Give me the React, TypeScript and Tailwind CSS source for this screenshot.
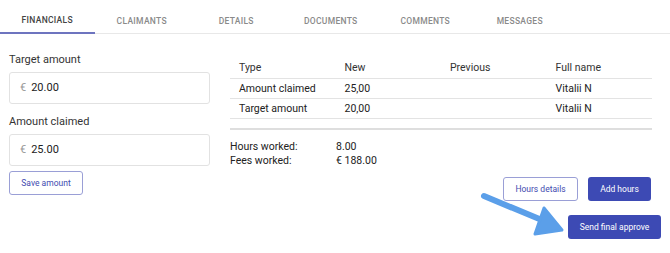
import React from "react";

const tabs = ["FINANCIALS", "CLAIMANTS", "DETAILS", "DOCUMENTS", "COMMENTS", "MESSAGES"];

function AmountInput({ label, value }: { label: string; value: string }) {
  return (
    <div className="flex flex-col">
      <div className="h-[24px] flex items-center text-[11px] text-[#333]">{label}</div>
      <div className="h-[32px] w-[201px] border border-[#e2e2e2] rounded-[3px] flex items-center pl-[10px] text-[11px]">
        <span className="text-[#999] mr-[5px]">€</span>
        <span className="text-[#222]">{value}</span>
      </div>
    </div>
  );
}

export default function App() {
  const rows = [
    ["Amount claimed", "25,00", "", "Vitalii N"],
    ["Target amount", "20,00", "", "Vitalii N"],
  ];
  return (
    <div className="relative w-[670px] h-[253px] bg-white overflow-hidden" style={{ fontFamily: "Roboto, 'Liberation Sans', sans-serif" }}>
      <div className="flex h-[34px] border-b border-[#e8e8e8]">
        {tabs.map((t, i) => (
          <div
            key={t}
            className={
              i === 0
                ? "w-[94.5px] flex items-center justify-center pt-[9px] text-[8.5px] font-medium tracking-[0.3px] text-[#444] border-b-2 border-[#6d74bf] -mb-px"
                : "w-[94.5px] flex items-center justify-center pt-[10px] text-[8.5px] font-medium tracking-[0.3px] text-[#8a8a8a]"
            }
          >
            {t}
          </div>
        ))}
      </div>

      <div className="flex pl-[9px] pt-[14px]">
        <div className="w-[201px] flex flex-col">
          <AmountInput label="Target amount" value="20.00" />
          <div className="h-[6px]" />
          <AmountInput label="Amount claimed" value="25.00" />
          <button className="mt-[5px] w-[74px] h-[24px] border border-[#9a9fd6] rounded-[3px] text-[8.5px] text-[#3f4bb0] flex items-center justify-center">
            Save amount
          </button>
        </div>

        <div className="ml-[20px] w-[431px] flex flex-col pt-[9px]">
          <div className="w-[422px]">
            <div className="flex h-[22px] items-center border-b border-[#e3e3e3] text-[10.5px] text-[#333]">
              <div className="w-[105.5px] pl-[9px]">Type</div>
              <div className="w-[105.5px] pl-[9px]">New</div>
              <div className="w-[105.5px] pl-[9px]">Previous</div>
              <div className="w-[105.5px] pl-[9px]">Full name</div>
            </div>
            {rows.map((r, i) => (
              <div key={i} className="flex h-[20px] items-center border-b border-[#e3e3e3] text-[10.5px] text-[#222]">
                {r.map((c, j) => (
                  <div key={j} className="w-[105.5px] pl-[9px]">{c}</div>
                ))}
              </div>
            ))}
            <div className="mt-[9px] h-[2px] bg-[#dedede]" />
          </div>
          <div className="mt-[10px] flex flex-col text-[10.5px] text-[#222] leading-[14px]">
            <div className="flex"><div className="w-[106px]">Hours worked:</div><div>8.00</div></div>
            <div className="flex"><div className="w-[106px]">Fees worked:</div><div>€ 188.00</div></div>
          </div>
          <div className="mt-[9px] flex justify-end pr-[10px] gap-[10px]">
            <button className="w-[75px] h-[24px] border border-[#9a9fd6] rounded-[3px] text-[8.5px] text-[#3f4bb0] flex items-center justify-center">
              Hours details
            </button>
            <button className="w-[63px] h-[24px] bg-[#3d4ab4] rounded-[3px] text-[8.5px] text-white flex items-center justify-center">
              Add hours
            </button>
          </div>
          <div className="mt-[14px] flex justify-end">
            <button className="w-[93px] h-[24px] bg-[#3d4ab4] rounded-[3px] text-[8.5px] text-white flex items-center justify-center">
              Send final approve
            </button>
          </div>
        </div>
      </div>

      <svg className="absolute left-0 top-0 pointer-events-none" width="670" height="253">
        <line x1="484" y1="196" x2="549" y2="223" stroke="#5b9fe9" strokeWidth="6" strokeLinecap="round" />
        <polygon points="544,208 562,230 535,234" fill="#5b9fe9" stroke="#5b9fe9" strokeWidth="3" strokeLinejoin="round" />
      </svg>
    </div>
  );
}
